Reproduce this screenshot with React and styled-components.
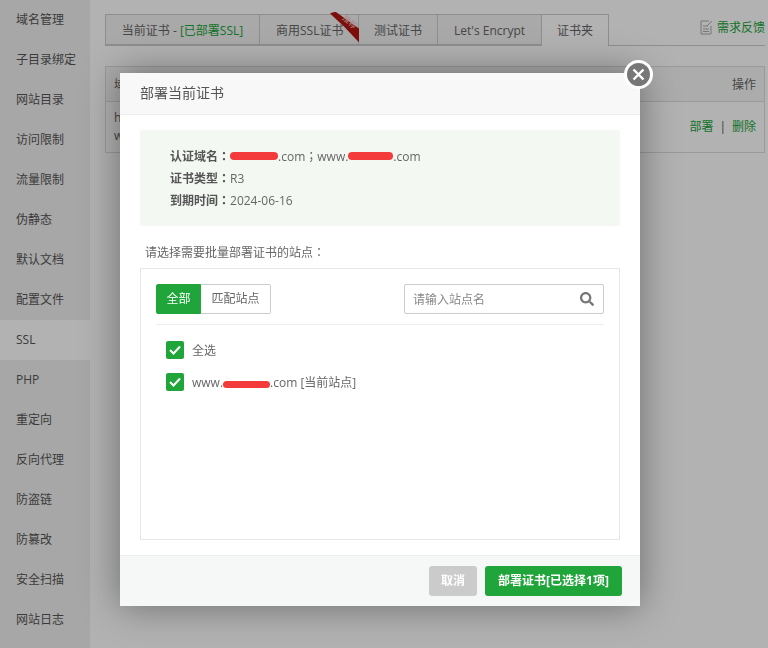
import React from "react";
import styled, { createGlobalStyle } from "styled-components";
import { FaSearch } from "react-icons/fa";

const GlobalStyle = createGlobalStyle`
  html, body {
    margin: 0;
    padding: 0;
    height: 100%;
    overflow: hidden;
    background: #fff;
  }
  body {
    font-family: "Open Sans", "Noto Sans CJK SC", sans-serif;
    font-size: 12px;
    color: #666;
  }
  * { box-sizing: border-box; }
`;

const Page = styled.div`
  display: flex;
  width: 768px;
  height: 648px;
  overflow: hidden;
`;

const Sidebar = styled.ul`
  width: 90px;
  flex: none;
  margin: 0;
  padding: 0;
  list-style: none;
  background: #f0f0f0;
`;

const SideItem = styled.li`
  height: 40px;
  line-height: 40px;
  padding-left: 16px;
  color: #555;
  background: ${p => (p.$active ? "#fff" : "transparent")};
`;

const Main = styled.div`
  flex: 1;
  padding: 14px 3px 0 15px;
`;

const TabBar = styled.div`
  display: flex;
  align-items: flex-end;
  height: 32px;
  border-bottom: 1px solid #ccc;
`;

const Tab = styled.div`
  position: relative;
  width: ${p => p.$w}px;
  height: ${p => (p.$active ? 32 : 31)}px;
  line-height: 32px;
  padding-left: ${p => p.$pad || 0}px;
  text-align: ${p => (p.$pad ? "left" : "center")};
  color: #666;
  border: 1px solid #ccc;
  border-left-width: ${p => (p.$first ? 1 : 0)}px;
  border-bottom-width: ${p => (p.$active ? 0 : 1)}px;
  background: ${p => (p.$active ? "#fff" : "#f2f2f2")};
  margin-bottom: ${p => (p.$active ? -1 : 0)}px;
  white-space: nowrap;
`;

const Deployed = styled.span`
  color: #20a53a;
`;

const Ribbon = styled.svg`
  position: absolute;
  top: -4px;
  right: -4px;
`;

const Feedback = styled.a`
  display: flex;
  align-items: center;
  gap: 4px;
  margin-left: auto;
  margin-bottom: 9px;
  color: #20a53a;
`;

const Table = styled.div`
  margin-top: 20px;
  height: 87px;
  border: 1px solid #ddd;
`;

const TableHead = styled.div`
  display: flex;
  justify-content: space-between;
  height: 35px;
  line-height: 35px;
  padding: 0 8px;
  background: #f6f6f6;
  border-bottom: 1px solid #ddd;
`;

const TableRow = styled.div`
  display: flex;
  justify-content: space-between;
  align-items: center;
  height: 50px;
  padding: 0 8px;
  line-height: 18px;
`;

const TableLink = styled.span`
  color: #20a53a;
`;

const Pipe = styled.span`
  margin: 0 6px;
  color: #555;
`;

const Overlay = styled.div`
  position: fixed;
  inset: 0;
  background: rgba(0, 0, 0, 0.3);
`;

const Modal = styled.div`
  position: absolute;
  left: 120px;
  top: 73px;
  width: 520px;
  height: 533px;
  display: flex;
  flex-direction: column;
  background: #fff;
  box-shadow: 0 0 36px rgba(0, 0, 0, 0.4);
`;

const CloseButton = styled.div`
  position: absolute;
  top: -13px;
  right: -13px;
  width: 29px;
  height: 29px;
  display: flex;
  align-items: center;
  justify-content: center;
  border-radius: 50%;
  border: 3px solid #fff;
  background: #777;
`;

const ModalTitle = styled.div`
  height: 42px;
  line-height: 40px;
  padding-left: 20px;
  font-size: 14px;
  color: #555;
  background: #f8f8f8;
  border-bottom: 1px solid #eee;
`;

const ModalBody = styled.div`
  flex: 1;
  padding: 15px 20px;
`;

const InfoBox = styled.div`
  height: 96px;
  padding: 15px 30px;
  background: #f4f8f3;
  border-radius: 2px;
`;

const InfoLine = styled.div`
  height: 22px;
  line-height: 22px;
  color: #666;
  white-space: nowrap;
`;

const InfoLabel = styled.b`
  font-weight: 700;
  color: #555;
`;

// the TC face centres full-width colons the way the screenshot does
const Punct = styled.span`
  font-family: "Noto Sans CJK TC", sans-serif;
`;

const Scribble = styled.span`
  display: inline-block;
  width: ${p => p.$w}px;
  height: ${p => p.$h}px;
  vertical-align: ${p => p.$v}px;
  border-radius: 4px;
  background: #f33b3b;
`;

const PickLabel = styled.div`
  margin-top: 17px;
  padding-left: 5px;
  height: 18px;
  line-height: 18px;
  color: #666;
`;

const SiteBox = styled.div`
  margin-top: 7px;
  height: 272px;
  padding: 15px;
  border: 1px solid #e6e6e6;
`;

const Toolbar = styled.div`
  display: flex;
  justify-content: space-between;
  height: 41px;
  padding-bottom: 10px;
  border-bottom: 1px solid #eee;
`;

const FilterGroup = styled.div`
  display: flex;
`;

const FilterButton = styled.div`
  width: ${p => p.$w}px;
  height: 30px;
  line-height: 28px;
  text-align: center;
  border: 1px solid ${p => (p.$on ? "#20a53a" : "#ccc")};
  border-left-width: ${p => (p.$on ? 1 : 0)}px;
  border-radius: ${p => (p.$on ? "2px 0 0 2px" : "0 2px 2px 0")};
  background: ${p => (p.$on ? "#20a53a" : "#fff")};
  color: ${p => (p.$on ? "#fff" : "#666")};
`;

const SearchBox = styled.div`
  display: flex;
  align-items: center;
  justify-content: space-between;
  width: 200px;
  height: 30px;
  padding: 0 9px 0 8px;
  color: #777;
  border: 1px solid #ccc;
  border-radius: 2px;
`;

const SearchText = styled.span`
  color: #888;
`;

const SiteList = styled.div`
  display: flex;
  flex-direction: column;
  gap: 14px;
  padding: 16px 0 0 10px;
`;

const SiteRow = styled.div`
  display: flex;
  align-items: center;
  gap: 8px;
  height: 18px;
  color: #666;
`;

const CheckBox = styled.span`
  width: 18px;
  height: 18px;
  display: flex;
  align-items: center;
  justify-content: center;
  border-radius: 2px;
  background: #20a53a;
`;

const ModalFooter = styled.div`
  display: flex;
  justify-content: flex-end;
  gap: 8px;
  height: 51px;
  padding: 10px 18px 0 0;
  background: #f6f8f8;
  border-top: 1px solid #eee;
`;

const FooterButton = styled.div`
  width: ${p => p.$w}px;
  height: 30px;
  line-height: 30px;
  text-align: center;
  font-weight: 700;
  color: #fff;
  border-radius: 3px;
  background: ${p => (p.$muted ? "#cbcbcb" : "#20a53a")};
`;

const menu = ["域名管理", "子目录绑定", "网站目录", "访问限制", "流量限制", "伪静态", "默认文档", "配置文件", "SSL", "PHP", "重定向", "反向代理", "防盗链", "防篡改", "安全扫描", "网站日志"];

const Tick = () => (
  <svg width="12" height="10" viewBox="0 0 12 10">
    <path d="M1 5l3.5 3.5L11 1.5" fill="none" stroke="#fff" strokeWidth="2" />
  </svg>
);

export default function App() {
  return (
    <>
      <GlobalStyle />
      <Page>
        <Sidebar>
          {menu.map(m => (
            <SideItem key={m} $active={m === "SSL"}>{m}</SideItem>
          ))}
        </Sidebar>
        <Main>
          <TabBar>
            <Tab $w={155} $first>当前证书 - <Deployed>[已部署SSL]</Deployed></Tab>
            <Tab $w={99} $pad={16}>
              商用SSL证书
              <Ribbon width="32" height="35" viewBox="0 0 32 35">
                <path d="M0 2.500Q3 0.500 6 1L31 19L31.500 34L14 15.500Z" fill="#b3160f" />
                <text transform="translate(18 13) rotate(42)" fontSize="8" fill="#f3c9c5" textAnchor="middle">推荐</text>
              </Ribbon>
            </Tab>
            <Tab $w={79}>测试证书</Tab>
            <Tab $w={104}>Let's Encrypt</Tab>
            <Tab $w={67} $active>证书夹</Tab>
            <Feedback>
              <svg width="13" height="15" viewBox="0 0 13 15">
                <path d="M9 1H1v13h10V6M3 6h5M3 9h6M3 11.500h6M7 6l5-5" fill="none" stroke="#aaa" />
              </svg>
              需求反馈
            </Feedback>
          </TabBar>
          <Table>
            <TableHead><span>域名</span><span>操作</span></TableHead>
            <TableRow>
              <span>h<br />w</span>
              <span><TableLink>部署</TableLink><Pipe>|</Pipe><TableLink>删除</TableLink></span>
            </TableRow>
          </Table>
        </Main>
      </Page>
      <Overlay />
      <Modal>
        <CloseButton>
          <svg width="13" height="13" viewBox="0 0 13 13">
            <path d="M1.500 1.500l10 10M11.500 1.500l-10 10" stroke="#fff" strokeWidth="2.400" />
          </svg>
        </CloseButton>
        <ModalTitle>部署当前证书</ModalTitle>
        <ModalBody>
          <InfoBox>
            <InfoLine><InfoLabel>认证域名<Punct>：</Punct></InfoLabel><Scribble $w={48} $h={8} $v={1} />.com<Punct>；</Punct>www.<Scribble $w={45} $h={8} $v={1} />.com</InfoLine>
            <InfoLine><InfoLabel>证书类型<Punct>：</Punct></InfoLabel>R3</InfoLine>
            <InfoLine><InfoLabel>到期时间<Punct>：</Punct></InfoLabel>2024-06-16</InfoLine>
          </InfoBox>
          <PickLabel>请选择需要批量部署证书的站点<Punct>：</Punct></PickLabel>
          <SiteBox>
            <Toolbar>
              <FilterGroup>
                <FilterButton $w={45} $on>全部</FilterButton>
                <FilterButton $w={70}>匹配站点</FilterButton>
              </FilterGroup>
              <SearchBox>
                <SearchText>请输入站点名</SearchText>
                <FaSearch size={14} />
              </SearchBox>
            </Toolbar>
            <SiteList>
              <SiteRow><CheckBox><Tick /></CheckBox>全选</SiteRow>
              <SiteRow><CheckBox><Tick /></CheckBox><span>www.<Scribble $w={47} $h={7} $v={-1} />.com [当前站点]</span></SiteRow>
            </SiteList>
          </SiteBox>
        </ModalBody>
        <ModalFooter>
          <FooterButton $w={48} $muted>取消</FooterButton>
          <FooterButton $w={137}>部署证书[已选择1项]</FooterButton>
        </ModalFooter>
      </Modal>
    </>
  );
}
